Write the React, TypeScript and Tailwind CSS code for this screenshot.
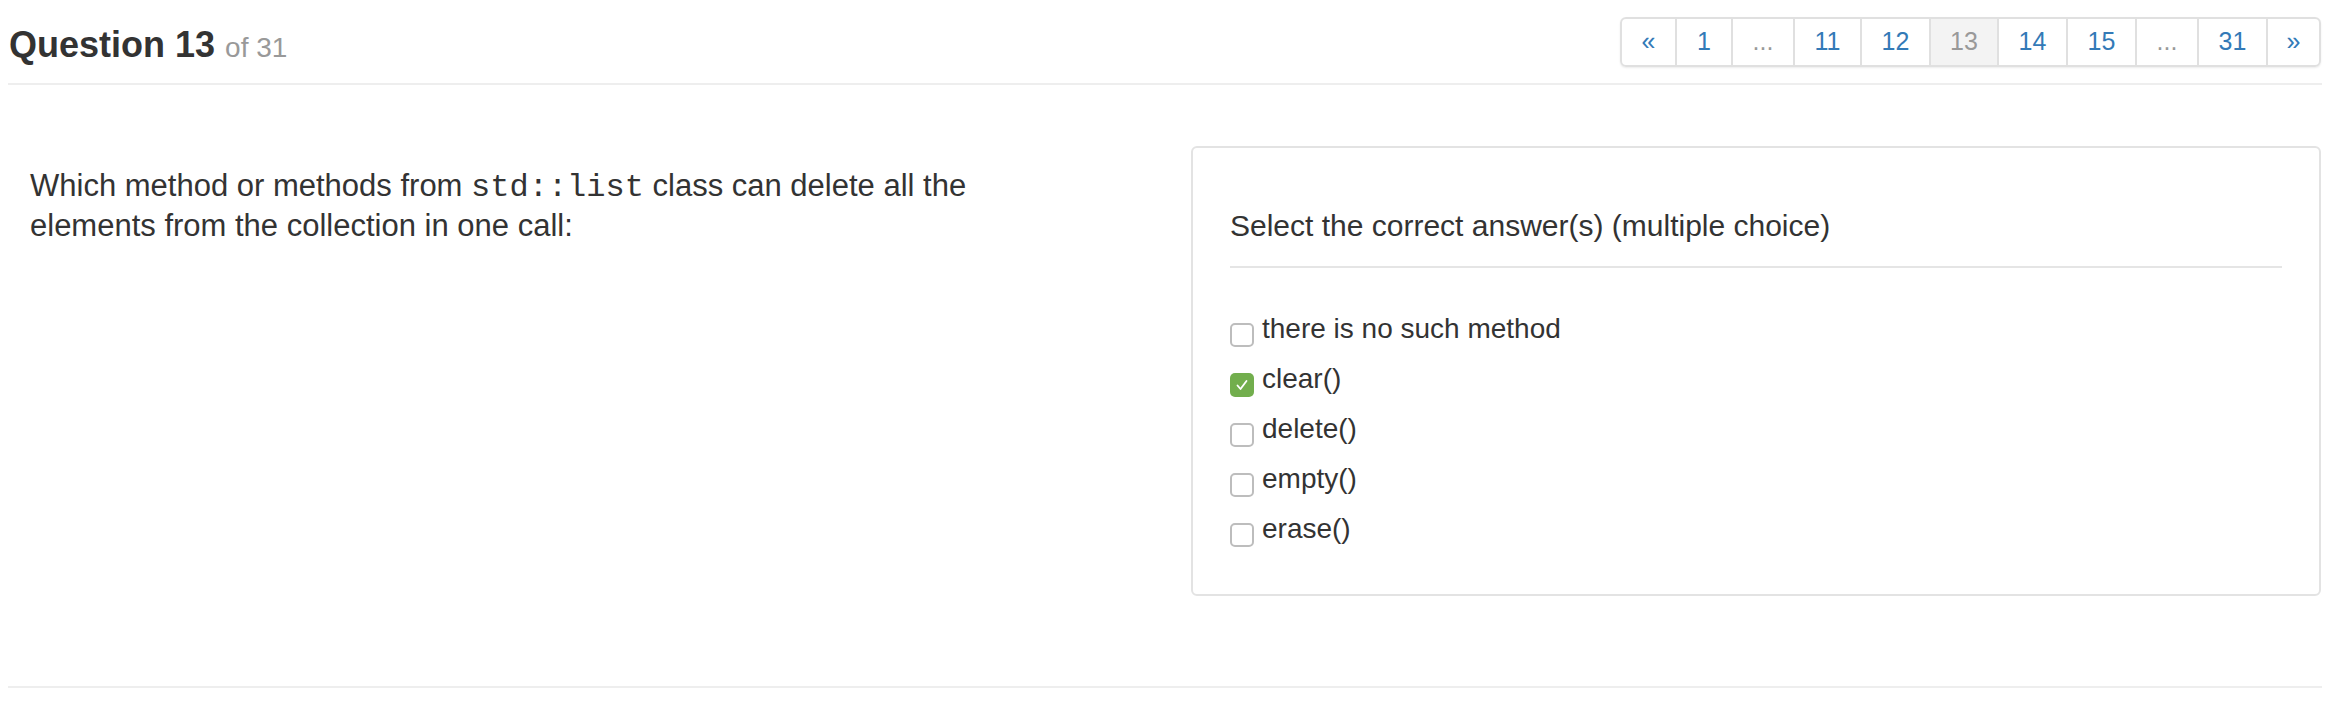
const pages = [
  { label: '«', w: 'w-[53px]', kind: 'link' },
  { label: '1', w: 'w-[56px]', kind: 'link' },
  { label: '...', w: 'w-[62px]', kind: 'gap' },
  { label: '11', w: 'w-[67px]', kind: 'link' },
  { label: '12', w: 'w-[69px]', kind: 'link' },
  { label: '13', w: 'w-[68px]', kind: 'active' },
  { label: '14', w: 'w-[69px]', kind: 'link' },
  { label: '15', w: 'w-[69px]', kind: 'link' },
  { label: '...', w: 'w-[62px]', kind: 'gap' },
  { label: '31', w: 'w-[69px]', kind: 'link' },
  { label: '»', w: 'w-[53px]', kind: 'link' },
];

const answers = [
  { text: 'there is no such method', checked: false },
  { text: 'clear()', checked: true },
  { text: 'delete()', checked: false },
  { text: 'empty()', checked: false },
  { text: 'erase()', checked: false },
];

function Checkbox({ checked }: { checked: boolean }) {
  if (checked) {
    return (
      <span className="mt-[19px] flex h-[24px] w-[24px] shrink-0 items-center justify-center rounded-[5px] bg-[#72ae4d]">
        <svg width="16" height="16" viewBox="0 0 16 16" fill="none">
          <polyline
            points="3.5,8.5 6.5,12 12.5,4"
            stroke="white"
            strokeWidth="1.8"
            strokeLinecap="round"
            strokeLinejoin="round"
          />
        </svg>
      </span>
    );
  }
  return (
    <span className="mt-[19px] block h-[24px] w-[24px] shrink-0 rounded-[5px] border-2 border-[#bdbdbd] bg-white" />
  );
}

export default function App() {
  return (
    <main className="min-h-screen bg-white px-[8px] font-['Liberation_Sans',Arial,sans-serif] text-[#333]">
      <header className="flex h-[85px] justify-between border-b-2 border-[#eee]">
        <h1 className="ml-[1px] mt-[27px] text-[36px] font-bold leading-[36px]">
          Question 13 <span className="text-[28px] font-normal text-[#999]">of 31</span>
        </h1>
        <nav className="mr-[1px] mt-[17px] flex h-[50px] overflow-hidden rounded-[6px] border-2 border-[#e0e0e0] shadow-[0_1px_2px_rgba(0,0,0,0.08)]">
          {pages.map((p, index) => (
            <span
              key={index}
              className={`flex h-full items-center justify-center text-[25px] ${p.w} ${
                index > 0 ? 'border-l-2 border-[#e0e0e0]' : ''
              } ${
                p.kind === 'active'
                  ? 'bg-[#f3f3f3] text-[#999]'
                  : p.kind === 'gap'
                    ? 'text-[#999]'
                    : 'text-[#337ab7]'
              }`}
            >
              {p.label}
            </span>
          ))}
        </nav>
      </header>

      <section className="mt-[61px] flex">
        <div className="flex-1 pl-[22px] pt-[20px]">
          <p className="w-[1010px] text-[31px] leading-[40px]">
            Which method or methods from{' '}
            <code className="font-['Liberation_Mono','Courier_New',monospace] text-[32px] leading-[32px] font-normal text-[#333]">
              std::list
            </code>{' '}
            class can delete all the elements from the collection in one call:
          </p>
        </div>

        <div className="mr-[1px] w-[1130px] rounded-[6px] border-2 border-[#e3e3e3] px-[37px] pb-[40px] pt-[58px]">
          <div className="border-b-2 border-[#e5e5e5] pb-[20px] text-[30px] leading-[40px]">
            Select the correct answer(s) (multiple choice)
          </div>
          <ul className="mt-[36px]">
            {answers.map((a) => (
              <li key={a.text} className="flex items-start gap-[8px]">
                <Checkbox checked={a.checked} />
                <span className="text-[28px] leading-[50px]">{a.text}</span>
              </li>
            ))}
          </ul>
        </div>
      </section>

      <hr className="mt-[90px] border-t-2 border-[#eee]" />
    </main>
  );
}
